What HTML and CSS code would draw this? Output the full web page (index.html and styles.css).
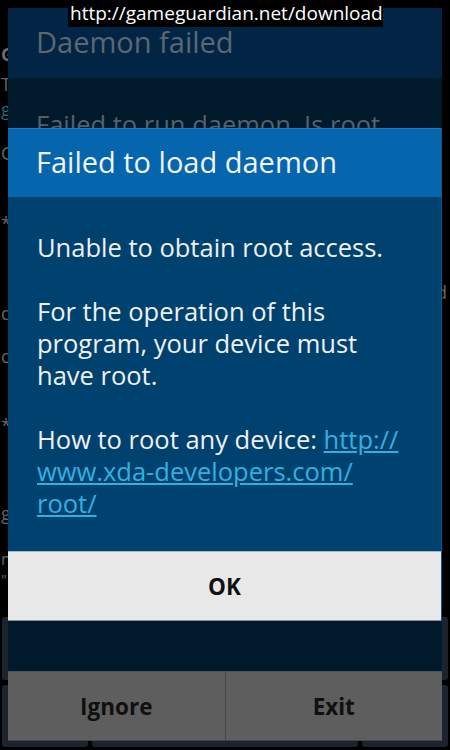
FILE: index.html
```html
<!DOCTYPE html>
<html lang="en">
<head>
  <meta charset="UTF-8" />
  <meta name="viewport" content="width=device-width, initial-scale=1.0"/>
  <title>GameGuardian</title>
  <link rel="stylesheet" href="styles.css">
</head>
<body>
  <!-- app screen behind the dialogs -->
  <div class="page">
    <div class="ln l1 strong">G</div>
    <div class="ln l2">T</div>
    <div class="ln l3 link">g</div>
    <div class="ln l4">G</div>
    <div class="ln l5">*</div>
    <div class="ln l6 right">d</div>
    <div class="ln l7">d</div>
    <div class="ln l8">c</div>
    <div class="ln l9">*</div>
    <div class="ln l10">g</div>
    <div class="ln l11">n</div>
    <div class="ln l12">"</div>
    <div class="btn-row row1"><span class="pbtn"></span></div>
    <div class="btn-row row2">
      <span class="pbtn small"></span>
      <span class="pbtn"></span>
      <span class="pbtn small"></span>
    </div>
  </div>

  <!-- first dialog, dimmed -->
  <div class="dialog back">
    <div class="title">Daemon failed</div>
    <div class="body">Failed to run daemon. Is root</div>
    <div class="buttons">
      <button class="gbtn">Ignore</button>
      <button class="gbtn">Exit</button>
    </div>
  </div>

  <!-- second dialog on top -->
  <div class="dialog front">
    <div class="title">Failed to load daemon</div>
    <div class="body">
      <p>Unable to obtain root access.</p>
      <p>For the operation of this<br>program, your device must<br>have root.</p>
      <p>How to root any device: <a href="#">http://<br>www.xda-developers.com/<br>root/</a></p>
    </div>
    <button class="ok">OK</button>
  </div>

  <div class="banner">http://gameguardian.net/download</div>
</body>
</html>
```

FILE: styles.css
```css
* {
  box-sizing: border-box;
}

body {
  margin: 0;
  width: 450px;
  height: 750px;
  background: #000;
  font-family: "Open Sans", "Noto Sans", sans-serif;
  position: relative;
  overflow: hidden;
}

/* background app */
.page {
  display: flex;
  flex-direction: column;
  height: 750px;
  font-size: 18px;
  line-height: 20px;
  color: #656565;
}

.ln { height: 20px; padding-left: 1px; }
.strong { font-weight: bold; color: #6e6e6e; }
.link { color: #1c6a82; }
.right { text-align: right; padding-right: 3px; }

.l1 { margin-top: 44px; }
.l2 { margin-top: 10px; }
.l3 { margin-top: 5px; }
.l4 { margin-top: 24px; }
.l5 { margin-top: 50px; }
.l6 { margin-top: 49px; }
.l7 { margin-top: 1px; }
.l8 { margin-top: 23px; }
.l9 { margin-top: 49px; }
.l10 { margin-top: 68px; }
.l11 { margin-top: 29px; height: 14px; line-height: 14px; font-size: 16px; }
.l12 { margin-top: 7px; height: 14px; line-height: 14px; font-size: 14px; }

.btn-row {
  display: flex;
  gap: 4px;
  padding: 0 2px;
}

.row1 { margin-top: 30px; height: 63px; }
.row2 { margin-top: 5px; height: 62px; }

.pbtn {
  flex: 1;
  background: #1b232c;
  border-radius: 3px;
}

.pbtn.small { flex: 0 0 86px; }

/* dialogs */
.dialog {
  position: absolute;
  left: 8px;
  width: 434px;
  display: flex;
  flex-direction: column;
}

.title {
  height: 70px;
  line-height: 68px;
  font-size: 29px;
  padding-left: 28px;
}

.back {
  top: 8px;
  height: 733px;
  background: #001a2c;
}

.back .title {
  background: #022545;
  color: #5c6770;
}

.back .body {
  flex: 1;
  padding: 30px 28px 0;
  font-size: 25.5px;
  line-height: 32px;
  color: #56606a;
}

.buttons {
  display: flex;
  height: 70px;
  background: #5e5e5e;
  border-top: 1px solid #4e5358;
  border-bottom: 1px solid #444;
}

.gbtn {
  flex: 1;
  border: none;
  background: none;
  font-family: inherit;
  font-size: 22.5px;
  font-weight: bold;
  color: #101010;
  padding: 0;
}

.gbtn + .gbtn {
  border-left: 1px solid #474747;
}

.front {
  top: 128px;
  background: #00426f;
  border-right: 1px solid #0a5a94;
}

.front .title {
  height: 69px;
  line-height: 66px;
  background: #0565ad;
  color: #f2f2f2;
  border-top: 1px solid #1a7cc4;
}

.front .body {
  height: 354px;
  padding: 34px 20px 0 29px;
  font-size: 25.5px;
  line-height: 32px;
  color: #f0f0f0;
}

.front p {
  margin: 0 0 32px;
}

.front a {
  color: #33b0e0;
}

.ok {
  height: 70px;
  border: none;
  border-top: 1px solid #a9b9c6;
  border-bottom: 1px solid #8c8c8c;
  background: #e8e8e8;
  font-family: inherit;
  font-size: 22.5px;
  font-weight: bold;
  color: #111;
}

.banner {
  position: absolute;
  top: 0;
  left: 68px;
  width: 315px;
  height: 27px;
  padding: 2px 0 0 2px;
  background: #000;
  color: #fff;
  font-size: 19px;
  line-height: 23px;
  white-space: nowrap;
}
```
